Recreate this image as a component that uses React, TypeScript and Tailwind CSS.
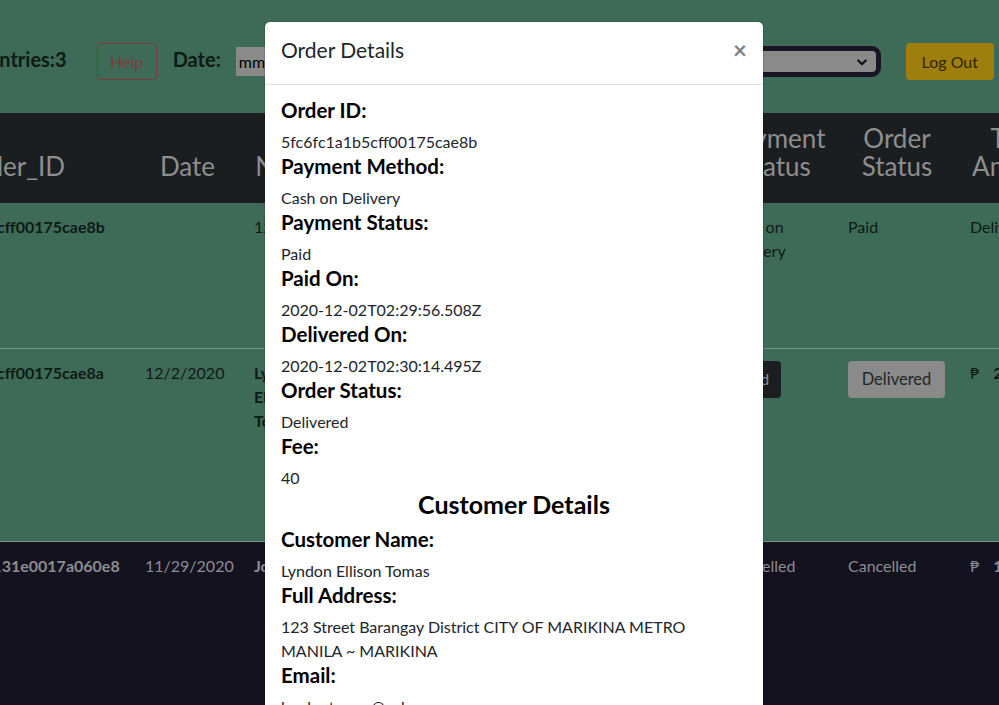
const DETAILS: [string, string][] = [
  ['Order ID:', '5fc6fc1a1b5cff00175cae8b'],
  ['Payment Method:', 'Cash on Delivery'],
  ['Payment Status:', 'Paid'],
  ['Paid On:', '2020-12-02T02:29:56.508Z'],
  ['Delivered On:', '2020-12-02T02:30:14.495Z'],
  ['Order Status:', 'Delivered'],
  ['Fee:', '40'],
];

const CUSTOMER: [string, string][] = [
  ['Customer Name:', 'Lyndon Ellison Tomas'],
  ['Full Address:', '123 Street Barangay District CITY OF MARIKINA METRO MANILA ~ MARIKINA'],
  ['Email:', 'lyndontomas@yahoo.com'],
];

const COLS = 'grid grid-cols-[238px_109px_94px_379px_121px_122px_120px] ml-[-105px] w-[1183px]';

function Field({ label, value }: { label: string; value: string }) {
  return (
    <div>
      <h5 className="mb-2 text-[20.5px] font-bold leading-[24px] text-black">{label}</h5>
      <p className="text-[16px] leading-[24px]">{value}</p>
    </div>
  );
}

function TopBar() {
  return (
    <div className="flex h-[113px] items-center pt-[10px] text-[#0e1a14]">
      <span className="mb-[6px] ml-[-12px] text-[20px] font-bold">Entries:3</span>
      <button className="ml-[30px] h-[37px] w-[60px] rounded border border-[#7a3a36] text-[16px] text-[#7a3d3a]">
        Help
      </button>
      <span className="mb-[6px] ml-[16px] text-[20px] font-bold">Date:</span>
      <div className="ml-[15px] flex h-[29px] w-[180px] items-center bg-[#8a8a8a] px-[3px] text-[16px] text-black">
        mm/dd/yyyy
      </div>
      <div className="ml-[20px] flex h-[31px] w-[445px] items-center justify-end rounded-[9px] border-[5px] border-[#1a1427] bg-[#8a8a8a] pr-[8px]">
        <svg width="12" height="12" viewBox="0 0 16 16" fill="none" stroke="#111" strokeWidth="3" strokeLinecap="round" strokeLinejoin="round">
          <path d="M3 6l5 5 5-5" />
        </svg>
      </div>
      <button className="ml-[25px] h-[37px] w-[88px] rounded bg-[#9e7e0c] text-[16px] text-[#2e2606]">
        Log Out
      </button>
    </div>
  );
}

function Peso({ amount }: { amount: string }) {
  return (
    <span>
      <span className="mr-[14px] font-normal">₱</span>
      {amount}
    </span>
  );
}

function Table() {
  return (
    <div className="text-[16px] leading-[24px]">
      <div className={`${COLS} h-[90px] bg-[#1b1e21] text-[26px] leading-[28px] text-[#8e8e8e]`}>
        {['Order_ID', 'Date', 'Name', 'Address', 'Payment Status', 'Order Status', 'Total Amount'].map((h, i) => (
          <div key={h} className={`flex items-end justify-center pb-[23px] text-center ${i === 0 ? 'pl-3 pr-[16px]' : 'px-3'}`}>
            {h}
          </div>
        ))}
      </div>

      <div className={`${COLS} h-[145px] text-[#0e1a14]`}>
        <div className="p-3 font-bold">5fc6fc1a1b5cff00175cae8b</div>
        <div className="p-3" />
        <div className="p-3">12/2/2020</div>
        <div className="p-3" />
        <div className="p-3">Cash on Delivery</div>
        <div className="p-3">Paid</div>
        <div className="p-3">Delivered</div>
      </div>

      <div className={`${COLS} h-[193px] border-t border-[#6e9483] text-[#0e1a14]`}>
        <div className="p-3 font-bold">5fc6fc1a1b5cff00175cae8a</div>
        <div className="p-3">12/2/2020</div>
        <div className="p-3 font-bold">Lyndon Ellison Tomas</div>
        <div className="p-3" />
        <div className="p-3">
          <span className="inline-block h-[37px] rounded bg-[#1b1e21] px-3 py-[6px] text-[#8e8e8e]">Paid</span>
        </div>
        <div className="p-3">
          <span className="inline-block h-[37px] w-[97px] rounded bg-[#8a8a8a] py-[6px] text-center text-[16.5px] text-[#262626]">
            Delivered
          </span>
        </div>
        <div className="p-3 font-bold">
          <Peso amount="250" />
        </div>
      </div>

      <div className={`${COLS} h-[200px] border-t border-[#6e9483] bg-[#15121f] text-[#8c8c91]`}>
        <div className="p-3 font-bold">5fc3a7e21d131e0017a060e8</div>
        <div className="p-3">11/29/2020</div>
        <div className="p-3 font-bold">John Doe</div>
        <div className="p-3" />
        <div className="p-3">Cancelled</div>
        <div className="p-3">Cancelled</div>
        <div className="p-3 font-bold">
          <Peso amount="150" />
        </div>
      </div>
    </div>
  );
}

function OrderModal() {
  return (
    <div className="absolute left-[265px] top-[22px] w-[498px] rounded-t-[5px] bg-white text-[#212529] shadow-[0_0_2px_rgba(0,0,0,0.4)]">
      <div className="flex items-center justify-between border-b border-[#dee2e6] px-4 pb-[19px] pt-[13px]">
        <h5 className="text-[21px] leading-[30px]">Order Details</h5>
        <button className="text-[24px] font-bold leading-none text-black opacity-50">×</button>
      </div>
      <div className="px-4 pb-4 pt-[13px]">
        {DETAILS.map(([l, v]) => (
          <Field key={l} label={l} value={v} />
        ))}
        <h4 className="mb-2 text-center text-[25px] font-bold leading-[29px] text-black">Customer Details</h4>
        {CUSTOMER.map(([l, v]) => (
          <Field key={l} label={l} value={v} />
        ))}
      </div>
    </div>
  );
}

export default function App() {
  return (
    <div className="relative h-[705px] w-[999px] overflow-hidden bg-[#3e6b58] font-['Lato',sans-serif]">
      <TopBar />
      <Table />
      <OrderModal />
    </div>
  );
}
